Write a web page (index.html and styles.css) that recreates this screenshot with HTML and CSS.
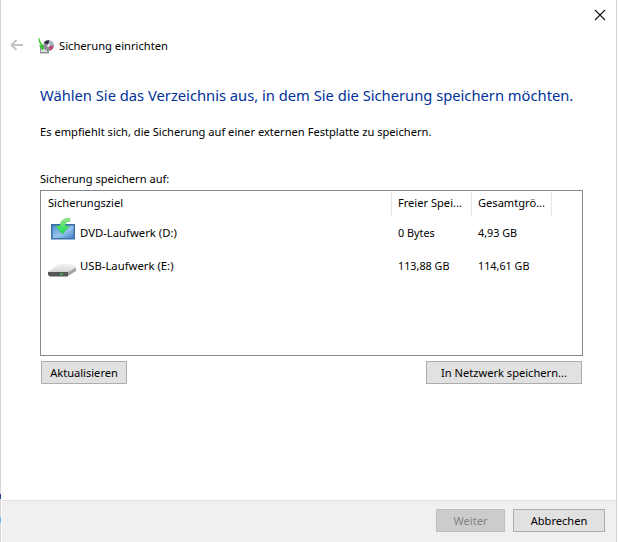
FILE: index.html
```html
<!DOCTYPE html>
<html lang="de">
<head>
<meta charset="utf-8">
<title>Sicherung einrichten</title>
<link rel="stylesheet" href="styles.css">
</head>
<body>
<div class="window">
  <span class="edge edge-a"></span>
  <span class="edge edge-b"></span>
  <div class="titlebar">
    <svg class="close" width="12" height="12" viewBox="0 0 12 12"><path d="M1 1L11 11M11 1L1 11" stroke="#111" stroke-width="1.1" fill="none"/></svg>
  </div>
  <div class="nav">
    <svg class="back" width="14" height="12" viewBox="0 0 14 12"><path d="M13 6H2M6.500 1L1.500 6L6.500 11" stroke="#c4c4c4" stroke-width="2" fill="none"/></svg>
    <svg class="appicon" width="16" height="17" viewBox="0 0 16 17">
      <path d="M2 10h9v6.500H2z" fill="#8f9296"/>
      <path d="M3 12h6v3H3z" fill="#dfe3e6"/>
      <path d="M1 0C0 3 1 6 3 8L1 8L4.500 13.500L8 8.500L5.500 8.500C3.500 7 2 4 1 0Z" fill="#35c42a"/>
      <circle cx="10.500" cy="8.500" r="5.300" fill="#8b8d94"/>
      <path d="M10.500 8.500L6 5.500A5.300 5.300 0 0 1 11 3.200Z" fill="#2d2d3d"/>
      <path d="M10.500 8.500L15.700 9.500A5.300 5.300 0 0 1 12 13.600Z" fill="#c2477a"/>
      <path d="M10.500 8.500L11 3.200A5.300 5.300 0 0 1 15.700 8Z" fill="#a9b6c6"/>
      <circle cx="10.500" cy="8.500" r="1.400" fill="#f2f2f2"/>
    </svg>
    <span class="nav-title">Sicherung einrichten</span>
  </div>
  <main class="content">
    <h1 class="heading">Wählen Sie das Verzeichnis aus, in dem Sie die Sicherung speichern möchten.</h1>
    <p class="hint">Es empfiehlt sich, die Sicherung auf einer externen Festplatte zu speichern.</p>
    <div class="label">Sicherung speichern auf:</div>
    <div class="list">
      <div class="row head">
        <div class="col c1">Sicherungsziel</div>
        <div class="col c2">Freier Spei...</div>
        <div class="col c3">Gesamtgrö...</div>
      </div>
      <div class="row item dvd">
        <div class="col c1">
          <svg class="drive" width="26" height="22" viewBox="0 0 26 22">
            <defs>
              <linearGradient id="dv" x1="0" y1="0" x2="1" y2="1"><stop offset="0" stop-color="#4f8fd0"/><stop offset=".55" stop-color="#96c4ec"/><stop offset="1" stop-color="#3f83ca"/></linearGradient>
              <linearGradient id="ar" x1="0" y1="0" x2="0" y2="1"><stop offset="0" stop-color="#9be68f"/><stop offset="1" stop-color="#12dd4e"/></linearGradient>
            </defs>
            <path d="M1 6h24v15.500H1z" fill="#3a6fa8"/>
            <path d="M2.500 7.500h21v12.500h-21z" fill="url(#dv)"/>
            <path d="M20 0C14 0 10 3 10 8H5.500L12.500 16L19.500 8H15C15 5 17 3 20 3.500Z" fill="url(#ar)" stroke="#3ab64a" stroke-width=".4"/>
          </svg>
          <span>DVD-Laufwerk (D:)</span>
        </div>
        <div class="col c2">0 Bytes</div>
        <div class="col c3">4,93 GB</div>
      </div>
      <div class="row item usb">
        <div class="col c1">
          <svg class="drive" width="28" height="14" viewBox="0 0 28 14">
            <defs><linearGradient id="us" x1="0" y1="0" x2="0" y2="1"><stop offset="0" stop-color="#f6f6f6"/><stop offset="1" stop-color="#cfcfcf"/></linearGradient></defs>
            <path d="M0 9L10 1.500Q12 .5 14 .5H24L28 4.500L20 10Z" fill="url(#us)"/>
            <path d="M19 10L28 4.500V8L20 13Z" fill="#a4a4a4"/>
            <path d="M0 9H20V13.500H2L0 12Z" fill="#55585a"/>
            <rect x="12" y="10.500" width="3" height="1.500" fill="#45c55a"/>
          </svg>
          <span>USB-Laufwerk (E:)</span>
        </div>
        <div class="col c2">113,88 GB</div>
        <div class="col c3">114,61 GB</div>
      </div>
    </div>
    <div class="actions">
      <button class="btn refresh" type="button">Aktualisieren</button>
      <button class="btn network" type="button">In Netzwerk speichern...</button>
    </div>
  </main>
  <footer class="footer">
    <button class="btn next" type="button" disabled>Weiter</button>
    <button class="btn cancel" type="button">Abbrechen</button>
  </footer>
</div>
</body>
</html>
```
FILE: styles.css
```css
* { box-sizing: border-box; }
html, body { margin: 0; padding: 0; background: #fff; }
body { width: 618px; height: 542px; overflow: hidden; font-family: "Noto Sans", "Open Sans", sans-serif; font-size: 11.1px; color: #000; }
.window { position: relative; width: 617px; height: 542px; display: flex; flex-direction: column; border-left: 1px solid #d6d6d6; border-right: 1px solid #d4d4d4; background: #fff; }
.edge { position: absolute; left: -1px; width: 1px; }
.edge-a { top: 494px; height: 5px; background: #1f3f8f; }
.edge-b { top: 517px; height: 6px; background: #5fb5e5; }
.titlebar { height: 35px; display: flex; justify-content: flex-end; padding: 9px 10px 0 0; }
.close { display: block; }
.nav { height: 20px; display: flex; align-items: center; }
.back { margin-left: 9px; }
.appicon { margin-left: 14px; }
.nav-title { margin-left: 5px; font-size: 11.2px; white-space: nowrap; }
.content { flex: 1; padding: 0 0 0 39px; display: flex; flex-direction: column; }
.heading { margin: 29px 0 0; font-weight: 400; font-size: 14.73px; line-height: 22px; color: #003399; white-space: nowrap; }
.hint { margin: 18px 0 0; line-height: 16px; font-size: 11.13px; white-space: nowrap; }
.label { margin-top: 31px; line-height: 16px; }
.list { margin-top: 3px; width: 543px; height: 166px; border: 1px solid #828790; padding-top: 1px; }
.row { display: flex; }
.head { height: 24px; align-items: center; }
.col { white-space: nowrap; padding-left: 6px; }
.c1 { width: 351px; display: flex; align-items: center; }
.c2 { width: 80px; }
.c3 { width: 80px; }
.head .col { height: 24px; line-height: 22px; border-right: 1px solid #e5e5e5; }
.head .c1 { display: block; padding-left: 7px; }
.item { height: 33px; align-items: center; }
.item .c1 span { font-size: 11.3px; }
.item .c2, .item .c3 { font-size: 10.8px; }
.dvd .c1 { padding-left: 9px; }
.dvd .drive { margin-right: 4px; margin-bottom: 7px; }
.usb .c1 { padding-left: 7px; }
.usb .drive { margin-right: 4px; margin-top: 9px; }
.usb .c1 span { margin-top: -1px; }
.actions { margin-top: 5px; width: 542px; padding-left: 1px; display: flex; justify-content: space-between; }
.btn { height: 23px; padding: 0; font: inherit; color: #000; background: #e1e1e1; border: 1px solid #adadad; }
.refresh { width: 86px; }
.network { width: 156px; }
.footer { height: 42px; margin-left: 1px; border-top: 1px solid #dfdfdf; background: #f0f0f0; display: flex; justify-content: flex-end; align-items: center; gap: 8px; padding: 0 11px 2px 0; }
.next { width: 69px; background: #cccccc; border-color: #bfbfbf; color: #838383; }
.cancel { width: 92px; }
```
